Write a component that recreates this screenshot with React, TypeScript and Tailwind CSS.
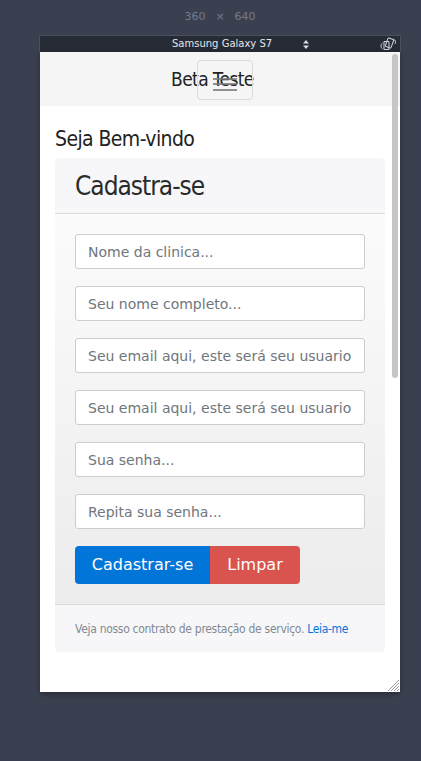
import React from 'react';

const abel = "font-['DejaVu_Sans_Condensed','DejaVu_Sans',sans-serif]";

const fields = [
  'Nome da clinica...',
  'Seu nome completo...',
  'Seu email aqui, este será seu usuario',
  'Seu email aqui, este será seu usuario',
  'Sua senha...',
  'Repita sua senha...',
];

const RotateIcon = () => (
  <svg width="18" height="14" viewBox="0 0 18 14" fill="none" stroke="#cfd3da" strokeWidth="1">
    <rect x="7.5" y="1.5" width="6" height="9" rx="1" transform="rotate(20 10.5 6)" />
    <path d="M5 4.5 L10 4.5 L10 12.5 L5 12.5 Z" />
    <path d="M3.5 12 C1.5 10.5 1.5 7.5 3.5 6" />
    <path d="M14.5 2 C16.5 3 17 5 16 7" />
  </svg>
);

const Arrows = () => (
  <svg width="6" height="9" viewBox="0 0 6 9" fill="#d8dbe1">
    <path d="M3 0 L6 3.5 L0 3.5 Z" />
    <path d="M0 5.5 L6 5.5 L3 9 Z" />
  </svg>
);

export default function App() {
  return (
    <div className="w-[421px] h-[761px] bg-[#3b4050] overflow-hidden font-['DejaVu_Sans',sans-serif]">
      {/* dimensões */}
      <div className="ml-[40px] w-[360px] h-[35px] flex items-center justify-center gap-[10px] text-[11px] text-[#737a8a]">
        <span>360</span>
        <span>×</span>
        <span>640</span>
      </div>

      {/* barra do device */}
      <div className="ml-[39px] w-[362px] h-[17px] border border-[#4c5160] border-b-0 bg-[#272b36] flex items-center pl-[132px] pr-[3px] text-[10px] text-[#e4e6ea]">
        <span className="leading-none">Samsung Galaxy S7</span>
        <span className="ml-[31px]">
          <Arrows />
        </span>
        <span className="ml-auto">
          <RotateIcon />
        </span>
      </div>

      {/* página */}
      <div className="relative ml-[40px] w-[360px] h-[640px] bg-white overflow-hidden shadow-[0_2px_6px_rgba(0,0,0,0.35)]">
        {/* navbar */}
        <div className="relative h-[54px] bg-[#f5f5f5] flex items-center pl-[131px]">
          <span className={clsxLike(abel, 'text-[19px] tracking-[-0.6px] text-[#222] leading-none')}>Beta Teste</span>
          <div className="absolute left-[157px] top-[8px] w-[56px] h-[40px] border border-[#dcdcdc] rounded-[4px] flex flex-col items-center justify-center gap-[3.5px] pt-[8px]">
            <span className="block w-[24px] h-[2px] bg-[#777]/80" />
            <span className="block w-[24px] h-[2px] bg-[#777]/80" />
            <span className="block w-[24px] h-[2px] bg-[#777]/80" />
          </div>
        </div>

        <div className="px-[15px]">
          <h2 className={clsxLike(abel, 'mt-[20px] mb-[6px] text-[21px] tracking-[-0.6px] leading-[26px] text-[#222]')}>
            Seja Bem-vindo
          </h2>

          {/* card */}
          <div className="rounded-[4px] overflow-hidden">
            <div className="h-[56px] bg-[#f7f7f9] border-b border-[#dadada] flex items-center px-[20px]">
              <h3 className={clsxLike(abel, 'text-[26px] tracking-[-1px] leading-none text-[#292b2c]')}>Cadastra-se</h3>
            </div>

            <div className="bg-gradient-to-b from-[#fbfbfb] to-[#ececec] px-[20px] pt-[20px] pb-[20px] flex flex-col gap-[17px]">
              {fields.map((f, i) => (
                <input
                  key={i}
                  readOnly
                  placeholder={f}
                  className="w-full h-[35px] bg-white border border-[#cdcdcd] rounded-[3px] px-[12px] text-[14px] text-[#464a4c] placeholder:text-[#6f767c] outline-none"
                />
              ))}
              <div className="flex">
                <button className="w-[135px] h-[38px] bg-[#0275d8] text-white text-[16px] rounded-l-[4px]">
                  Cadastrar-se
                </button>
                <button className="w-[90px] h-[38px] bg-[#d9534f] text-white text-[16px] rounded-r-[4px]">
                  Limpar
                </button>
              </div>
            </div>

            <div className="h-[48px] bg-[#f7f7f9] border-t border-[#dadada] flex items-center px-[20px]">
              <p className={clsxLike(abel, 'whitespace-nowrap text-[12px] tracking-[-0.3px] text-[#818a91]')}>
                Veja nosso contrato de prestação de serviço. <span className="text-[#0275d8]">Leia-me</span>
              </p>
            </div>
          </div>
        </div>

        {/* scrollbar */}
        <div className="absolute right-[2px] top-[2px] w-[6px] h-[324px] rounded-full bg-[#c6c6c6]" />

        {/* alça de redimensionar */}
        <svg className="absolute right-[1px] bottom-[1px]" width="12" height="12" viewBox="0 0 12 12" stroke="#9a9a9a" strokeWidth="1">
          <path d="M12 1 L1 12" />
          <path d="M12 4 L4 12" />
          <path d="M12 7 L7 12" />
          <path d="M12 10 L10 12" />
        </svg>
      </div>
    </div>
  );
}

function clsxLike(...parts: string[]) {
  return parts.join(' ');
}
